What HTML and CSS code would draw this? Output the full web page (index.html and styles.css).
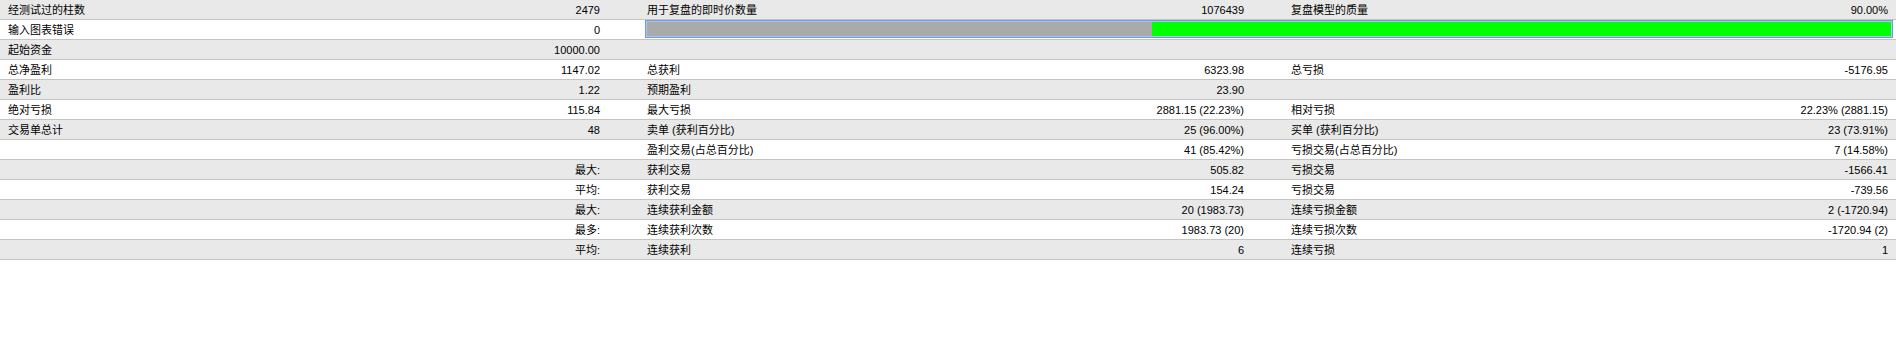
FILE: index.html
```html
<!DOCTYPE html>
<html lang="zh">
<head>
<meta charset="utf-8">
<title>测试报告</title>
<link rel="stylesheet" href="styles.css">
</head>
<body>
<div class="report">
  <div class="row">
    <div class="cell"><span>经测试过的柱数</span><span>2479</span></div>
    <div class="cell"><span>用于复盘的即时价数量</span><span>1076439</span></div>
    <div class="cell"><span>复盘模型的质量</span><span>90.00%</span></div>
  </div>
  <div class="row">
    <div class="cell"><span>输入图表错误</span><span>0</span></div>
    <div class="bar"><div class="bar-gray" style="width:40.5%"></div><div class="bar-green"></div></div>
  </div>
  <div class="row">
    <div class="cell"><span>起始资金</span><span>10000.00</span></div>
    <div class="cell"></div>
    <div class="cell"></div>
  </div>
  <div class="row">
    <div class="cell"><span>总净盈利</span><span>1147.02</span></div>
    <div class="cell"><span>总获利</span><span>6323.98</span></div>
    <div class="cell"><span>总亏损</span><span>-5176.95</span></div>
  </div>
  <div class="row">
    <div class="cell"><span>盈利比</span><span>1.22</span></div>
    <div class="cell"><span>预期盈利</span><span>23.90</span></div>
    <div class="cell"></div>
  </div>
  <div class="row">
    <div class="cell"><span>绝对亏损</span><span>115.84</span></div>
    <div class="cell"><span>最大亏损</span><span>2881.15 (22.23%)</span></div>
    <div class="cell"><span>相对亏损</span><span>22.23% (2881.15)</span></div>
  </div>
  <div class="row">
    <div class="cell"><span>交易单总计</span><span>48</span></div>
    <div class="cell"><span>卖单 (获利百分比)</span><span>25 (96.00%)</span></div>
    <div class="cell"><span>买单 (获利百分比)</span><span>23 (73.91%)</span></div>
  </div>
  <div class="row">
    <div class="cell"></div>
    <div class="cell"><span>盈利交易(占总百分比)</span><span>41 (85.42%)</span></div>
    <div class="cell"><span>亏损交易(占总百分比)</span><span>7 (14.58%)</span></div>
  </div>
  <div class="row">
    <div class="cell"><span></span><span>最大:</span></div>
    <div class="cell"><span>获利交易</span><span>505.82</span></div>
    <div class="cell"><span>亏损交易</span><span>-1566.41</span></div>
  </div>
  <div class="row">
    <div class="cell"><span></span><span>平均:</span></div>
    <div class="cell"><span>获利交易</span><span>154.24</span></div>
    <div class="cell"><span>亏损交易</span><span>-739.56</span></div>
  </div>
  <div class="row">
    <div class="cell"><span></span><span>最大:</span></div>
    <div class="cell"><span>连续获利金额</span><span>20 (1983.73)</span></div>
    <div class="cell"><span>连续亏损金额</span><span>2 (-1720.94)</span></div>
  </div>
  <div class="row">
    <div class="cell"><span></span><span>最多:</span></div>
    <div class="cell"><span>连续获利次数</span><span>1983.73 (20)</span></div>
    <div class="cell"><span>连续亏损次数</span><span>-1720.94 (2)</span></div>
  </div>
  <div class="row">
    <div class="cell"><span></span><span>平均:</span></div>
    <div class="cell"><span>连续获利</span><span>6</span></div>
    <div class="cell"><span>连续亏损</span><span>1</span></div>
  </div>
</div>
</body>
</html>
```

FILE: styles.css
```css
html, body {
  margin: 0;
  padding: 0;
  background: #ffffff;
}

body {
  font-family: "Liberation Sans", "Noto Sans CJK SC", sans-serif;
  font-size: 11px;
  color: #000000;
}

.report {
  display: flex;
  flex-direction: column;
  width: 1896px;
}

.row {
  display: grid;
  grid-template-columns: 608px 613px 613px;
  column-gap: 31px;
  height: 20px;
  box-sizing: border-box;
  border-bottom: 1px solid #c4c4c4;
  background: #ffffff;
}

.row:nth-child(odd) {
  background: #e9e9e9;
}

.cell {
  display: flex;
  justify-content: space-between;
  align-items: flex-start;
  padding: 1px 8px 0 8px;
  line-height: 18px;
  white-space: nowrap;
}

.bar {
  grid-column: 2 / 4;
  display: flex;
  height: 18px;
  margin: 0 3px 0 6px;
  box-sizing: border-box;
  border: 1px solid #6e9ed6;
  box-shadow: inset 0 0 0 1px #a9c7ea;
  background: #00ff00;
}

.bar-gray {
  background: #aaaaaa;
  border: 1px solid #a9c7ea;
  border-right: none;
}

.bar-green {
  flex: 1;
  background: #00ff00;
  border: 1px solid #a9c7ea;
  border-left: none;
}
```
